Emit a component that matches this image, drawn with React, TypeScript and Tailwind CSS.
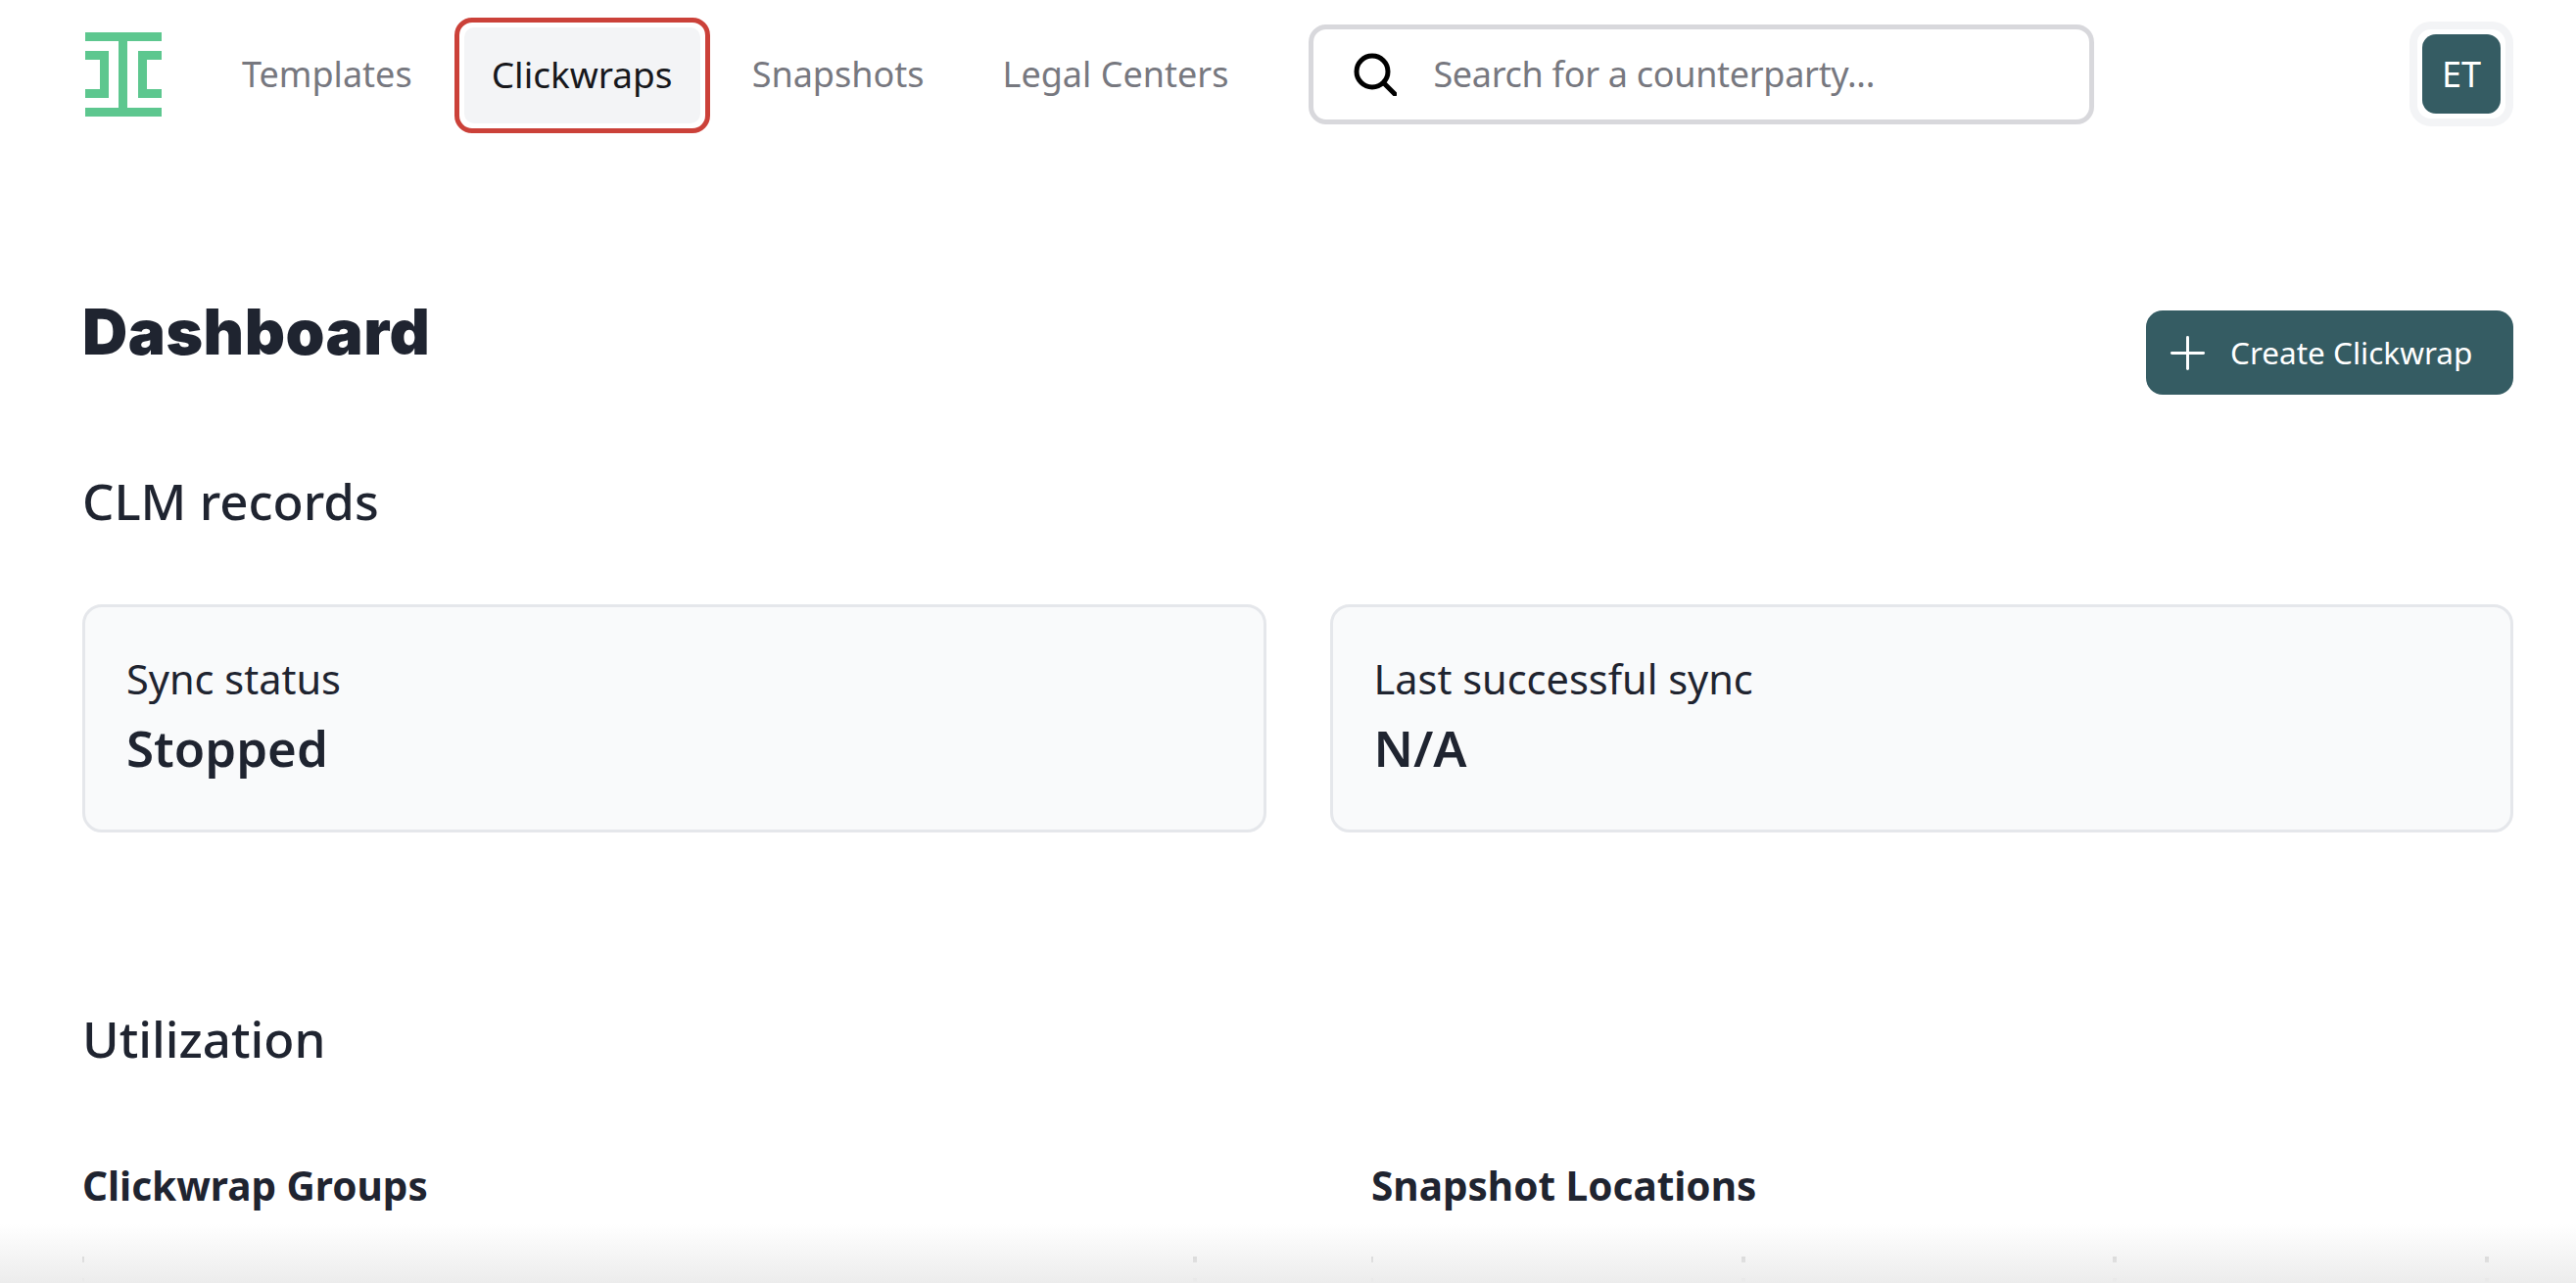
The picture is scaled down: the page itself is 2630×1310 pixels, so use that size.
import React from 'react';
import { Plus } from 'lucide-react';

const body = { fontFamily: '"Noto Sans", sans-serif' };

const tickLine = 'h-[26px] bg-[linear-gradient(#c8c8c8_6px,transparent_6px,transparent_22px,#c8c8c8_22px)]';

const Logo = () => (
  <svg width="78" height="86" viewBox="0 0 78 86" fill="#5dc78f">
    <rect x="0" y="0" width="78" height="9" />
    <rect x="0" y="77" width="78" height="9" />
    <rect x="34" y="0" width="9" height="86" />
    <path d="M0 19h24v48H0v-9h15V28H0z" />
    <path d="M78 19H54v48h24v-9H63V28h15z" />
  </svg>
);

const NavLink = ({ children }: { children: React.ReactNode }) => (
  <div className="flex h-[120px] items-center px-[40px] pb-[2px] text-[36px] text-[#77787f]">{children}</div>
);

const StatCard = ({ label, value }: { label: string; value: string }) => (
  <div className="h-[233px] rounded-[20px] border-[3px] border-[#e5e7eb] bg-[#f9fafb] px-[42px] pt-[46px] text-[#1f2430]">
    <div className="text-[41.5px] leading-[54px]">{label}</div>
    <div className="mt-[11px] text-[51px] leading-[64px] font-semibold">{value}</div>
  </div>
);

const Ticks = ({ count, className }: { count: number; className: string }) => (
  <div className={`flex justify-between ${className}`}>
    {Array.from({ length: count }).map((_, i) => (
      <span key={i} className={`${tickLine} ${i === 0 ? 'w-[2px]' : 'w-[4px]'}`} />
    ))}
  </div>
);

export default function App() {
  return (
    <div className="relative h-[1310px] overflow-hidden bg-white" style={body}>
      <header className="flex h-[154px] items-start pl-[87px] pr-[64px]">
        <div className="mt-[33px] mr-[42px]">
          <Logo />
        </div>
        <nav className="mt-[17px] flex items-center">
          <NavLink>Templates</NavLink>
          <div className="mr-[3px] ml-[3px] rounded-[18px] border-[5px] border-[#cb4139] p-[5px]">
            <div className="flex h-[98px] w-[241px] items-center justify-center rounded-[10px] bg-[#f3f4f6] pb-[2px] text-[37px] text-[#17181c]">
              Clickwraps
            </div>
          </div>
          <NavLink>Snapshots</NavLink>
          <NavLink>Legal Centers</NavLink>
        </nav>
        <div className="mt-[25px] ml-[42px] flex h-[102px] w-[802px] items-center rounded-[18px] border-[5px] border-[#d8d8dc] pl-[41px]">
          <svg width="44" height="44" viewBox="0 0 44 44" fill="none" stroke="#000" strokeWidth="5" strokeLinecap="round">
            <circle cx="19" cy="19" r="16" />
            <path d="M31 31l11 11" />
          </svg>
          <span className="ml-[37px] text-[36px] tracking-[-0.3px] text-[#77787f]">Search for a counterparty...</span>
        </div>
        <div className="mt-[22px] ml-auto rounded-[22px] border-[8px] border-[#f3f4f6] p-[5px]">
          <div className="flex h-[81px] w-[80px] items-center justify-center rounded-[14px] bg-[#355c63] text-[36px] text-white">
            ET
          </div>
        </div>
      </header>

      <main className="pr-[64px] pl-[84px]">
        <div className="flex items-start justify-between">
          <h1 className="mt-[143px] text-[64px] leading-[84px] font-black tracking-[0.5px] text-[#1f2430]" style={{ fontFamily: 'Inter, sans-serif' }}>
            Dashboard
          </h1>
          <button className="mt-[163px] flex h-[86px] w-[375px] items-center rounded-[17px] bg-[#355c63] pl-[15px] text-[31.5px] text-white">
            <Plus size={55} strokeWidth={1.3} />
            <span className="ml-[16px]">Create Clickwrap</span>
          </button>
        </div>
        <h2 className="mt-[74px] text-[51px] leading-[68px] font-medium text-[#1f2430]">CLM records</h2>
        <div className="mt-[72px] grid grid-cols-2 gap-[65px]">
          <StatCard label="Sync status" value="Stopped" />
          <StatCard label="Last successful sync" value="N/A" />
        </div>
        <h2 className="mt-[176px] text-[51px] leading-[68px] font-medium text-[#1f2430]">Utilization</h2>
        <div className="mt-[90px] grid grid-cols-[1316px_1fr] text-[40.5px] leading-[54px] font-bold text-[#1f2430]">
          <div>
            <h3>Clickwrap Groups</h3>
            <Ticks count={2} className="mt-[45px] w-[1138px]" />
          </div>
          <div>
            <h3>Snapshot Locations</h3>
            <Ticks count={4} className="mt-[45px] w-[1141px]" />
          </div>
        </div>
      </main>

      <div className="absolute inset-x-0 bottom-0 h-[60px] bg-gradient-to-b from-transparent to-[#ececec]" />
    </div>
  );
}
